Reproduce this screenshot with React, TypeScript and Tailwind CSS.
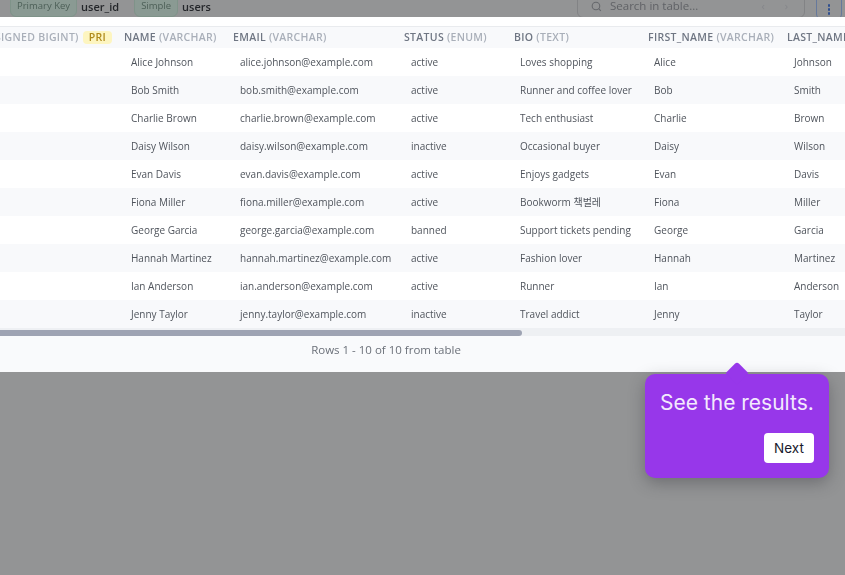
const columns = [
  { name: "NAME", type: "(VARCHAR)", width: "w-[109px]", pad: "pl-[7px]" },
  { name: "EMAIL", type: "(VARCHAR)", width: "w-[171px]", pad: "pl-[7px]" },
  { name: "STATUS", type: "(ENUM)", width: "w-[110px]", pad: "pl-[7px]" },
  { name: "BIO", type: "(TEXT)", width: "w-[134px]", pad: "pl-[6px]" },
  { name: "FIRST_NAME", type: "(VARCHAR)", width: "w-[139px]", pad: "pl-[6px]" },
  { name: "LAST_NAME", type: "(VARCHAR)", width: "w-[140px]", pad: "pl-[7px]" },
]

const rows = [
  ["Alice Johnson", "alice.johnson@example.com", "active", "Loves shopping", "Alice", "Johnson"],
  ["Bob Smith", "bob.smith@example.com", "active", "Runner and coffee lover", "Bob", "Smith"],
  ["Charlie Brown", "charlie.brown@example.com", "active", "Tech enthusiast", "Charlie", "Brown"],
  ["Daisy Wilson", "daisy.wilson@example.com", "inactive", "Occasional buyer", "Daisy", "Wilson"],
  ["Evan Davis", "evan.davis@example.com", "active", "Enjoys gadgets", "Evan", "Davis"],
  ["Fiona Miller", "fiona.miller@example.com", "active", "Bookworm 책벌레", "Fiona", "Miller"],
  ["George Garcia", "george.garcia@example.com", "banned", "Support tickets pending", "George", "Garcia"],
  ["Hannah Martinez", "hannah.martinez@example.com", "active", "Fashion lover", "Hannah", "Martinez"],
  ["Ian Anderson", "ian.anderson@example.com", "active", "Runner", "Ian", "Anderson"],
  ["Jenny Taylor", "jenny.taylor@example.com", "inactive", "Travel addict", "Jenny", "Taylor"],
]

function TopBar() {
  return (
    <div className="h-[17px] flex items-start overflow-hidden text-[9.5px] text-[#4c5f57] blur-[0.3px]">
      <div className="ml-[10px] -mt-[6px] h-[23px] px-[6px] pt-[1px] flex items-center border border-[#7f9389] rounded-md bg-[#8a9a93]">
        Primary Key
      </div>
      <div className="ml-[4px] h-[14px] flex items-center font-semibold text-[11px] text-[#24262a]">user_id</div>
      <div className="ml-[15px] -mt-[6px] h-[23px] px-[6px] pt-[1px] flex items-center border border-[#7f9389] rounded-md bg-[#8a9a93]">
        Simple
      </div>
      <div className="ml-[4px] h-[14px] flex items-center font-semibold text-[11px] text-[#24262a]">users</div>
      <div className="ml-auto -mt-[6px] w-[228px] h-[24px] pl-[12px] pr-[16px] flex items-center border border-[#828385] rounded-md text-[11.5px] text-[#606266]">
        <svg className="w-[13px] h-[13px] mr-[7px] text-[#66686c]" viewBox="0 0 24 24" fill="none" stroke="currentColor" strokeWidth="2">
          <circle cx="11" cy="11" r="7" />
          <path d="m20 20-4-4" />
        </svg>
        <span>Search in table...</span>
        <span className="ml-auto text-[#85868a] text-[11px]">‹</span>
        <span className="ml-[20px] text-[#85868a] text-[11px]">›</span>
      </div>
      <div className="ml-[11px] mr-[3px] -mt-[6px] w-[26px] h-[26px] pt-[5px] flex flex-col items-center justify-center gap-[1.5px] border border-[#66799c] rounded-md">
        <span className="w-[2.5px] h-[2.5px] rounded-full bg-[#2f4f8f]" />
        <span className="w-[2.5px] h-[2.5px] rounded-full bg-[#2f4f8f]" />
        <span className="w-[2.5px] h-[2.5px] rounded-full bg-[#2f4f8f]" />
      </div>
    </div>
  )
}

function ResultsTable() {
  return (
    <div className="h-[355px] bg-white overflow-hidden">
      <div className="h-[10px] border-b border-[#e9ebee]" />
      <div className="blur-[0.3px]">
        <div className="h-[21px] flex bg-[#f8f9fb] text-[10.5px] font-semibold tracking-[0.3px] whitespace-nowrap overflow-hidden">
          <div className="w-[124px] shrink-0 flex items-center justify-end pr-[12px] gap-[4px] text-[#a9afb9]">
            <span>SIGNED BIGINT)</span>
            <span className="px-[6px] h-[13px] leading-[13px] rounded-sm bg-[#fdf5c0] text-[#b08a1c]">PRI</span>
          </div>
          {columns.map((c) => (
            <div key={c.name} className={`${c.width} shrink-0 flex items-center gap-[3px] text-[#6f7683]`}>
              <span>{c.name}</span>
              <span className="text-[#a9afb9]">{c.type}</span>
            </div>
          ))}
        </div>
        {rows.map((row, i) => (
          <div
            key={row[0]}
            className={`h-[28px] flex items-center text-[10px] text-[#4f545c] whitespace-nowrap overflow-hidden ${i % 2 === 1 ? "bg-[#f8f9fb]" : "bg-white"}`}
          >
            <div className="w-[124px] shrink-0" />
            {row.map((cell, j) => (
              <div key={j} className={`${columns[j].width} ${columns[j].pad} shrink-0`}>
                {cell}
              </div>
            ))}
          </div>
        ))}
        <div className="h-[8px] pt-[2px] bg-[#eef0f3]">
          <div className="w-[522px] h-[6px] rounded-r-full bg-[#9ea3b3]" />
        </div>
        <div className="h-[36px] pb-[8px] flex items-center justify-center pr-[73px] bg-[#f9fafc] text-[11.5px] text-[#6b7079]">
          Rows 1 - 10 of 10 from table
        </div>
      </div>
    </div>
  )
}

function Tooltip() {
  return (
    <div className="absolute left-[645px] top-[374px] w-[184px] h-[104px] rounded-[10px] bg-[#9737ea] shadow-[0_5px_16px_rgba(40,40,50,0.35)] px-[15px] pt-[15px] font-['Inter',sans-serif]">
      <div className="absolute left-[84px] -top-[9px] w-[16px] h-[16px] rotate-45 rounded-tl-[3px] bg-[#9737ea]" />
      <div className="relative text-[21px] leading-[28px] text-[#f3eafd] whitespace-nowrap">See the results.</div>
      <div className="mt-[16px] flex justify-end">
        <button className="w-[50px] h-[30px] rounded-[4px] bg-white text-[13.5px] text-[#1a1a2e]">Next</button>
      </div>
    </div>
  )
}

export default function App() {
  return (
    <div className="relative w-[845px] h-[575px] overflow-hidden bg-[#939495] font-['Open_Sans','Noto_Sans_CJK_KR',sans-serif]">
      <TopBar />
      <ResultsTable />
      <Tooltip />
    </div>
  )
}
